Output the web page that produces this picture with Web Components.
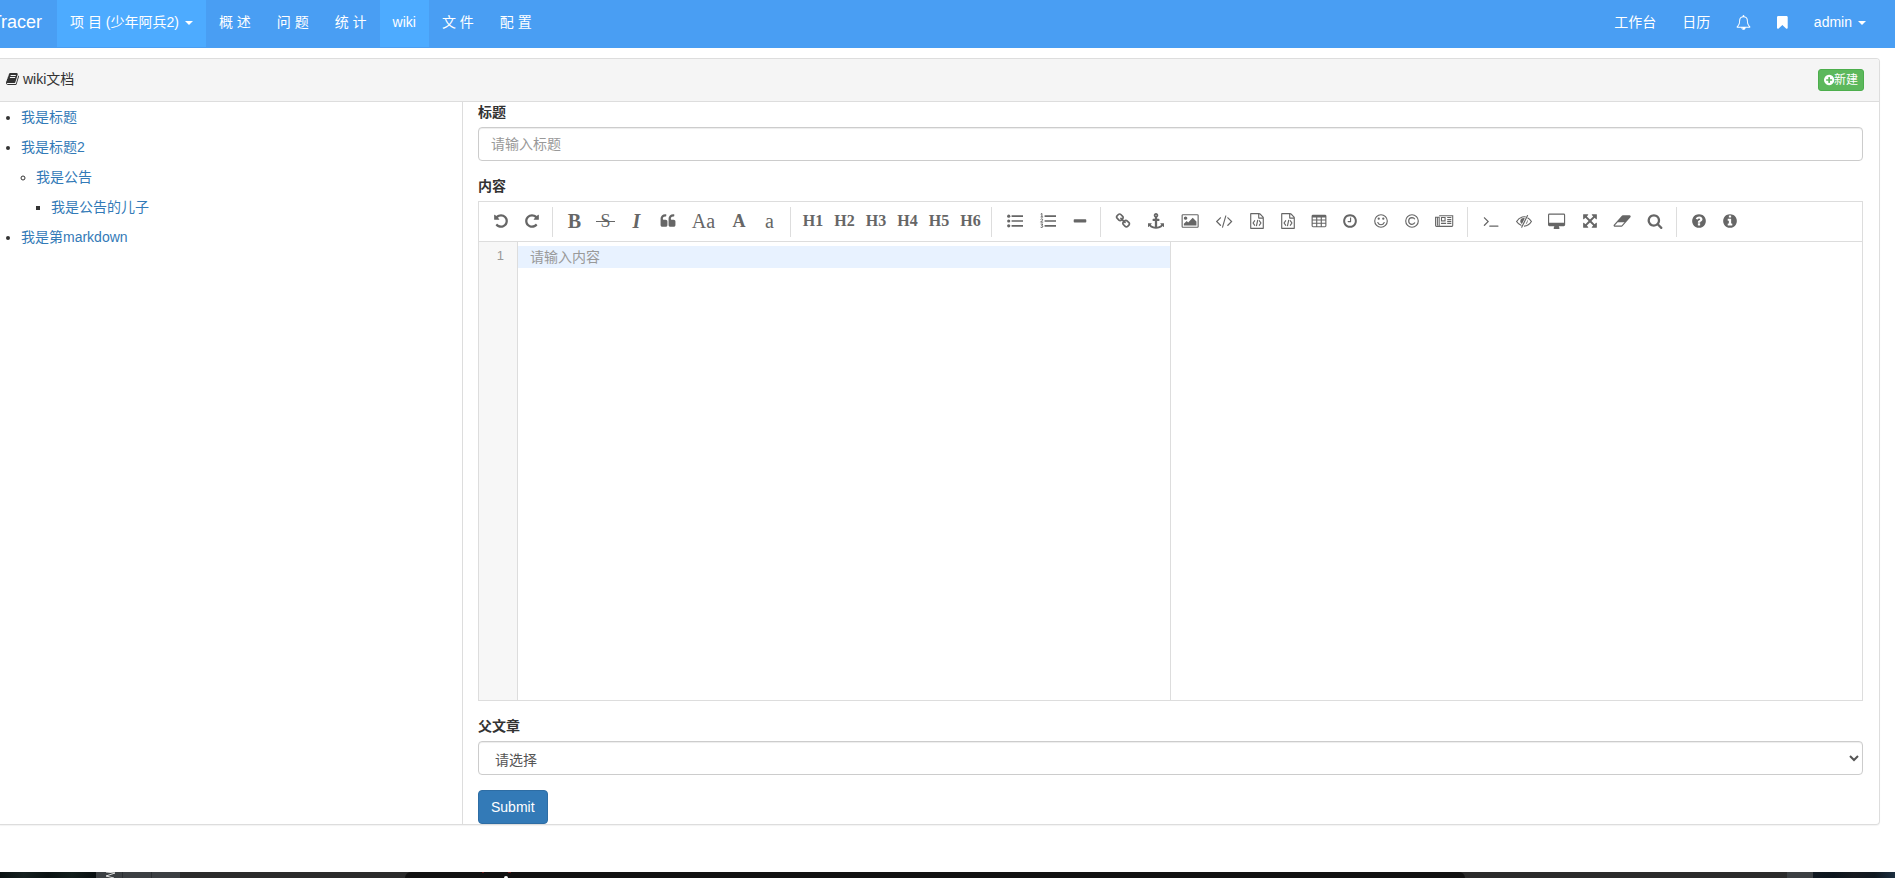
<!DOCTYPE html>
<html lang="zh-CN">
<head>
<meta charset="utf-8">
<meta name="viewport" content="width=device-width, initial-scale=1">
<title>wiki文档 - Tracer</title>
<style>
  body {
    margin: 0;
    background: #fff;
    color: #333;
    font: 14px/20px "Liberation Sans", "Noto Sans CJK SC", sans-serif;
  }
</style>
</head>
<body>
<wiki-page></wiki-page>

<script>
const CIRCLE = 'M1664 896q0 209-103 385.5t-279.5 279.5-385.5 103-385.5-103-279.5-279.5-103-385.5 103-385.5 279.5-279.5 385.5-103 385.5 103 279.5 279.5 103 385.5z';
const UNDO = '<path d="M1664 896q0 156-61 298t-164 245-245 164-298 61q-172 0-327-72.5t-264-204.5q-7-10-6.5-22.5t8.5-20.5l137-138q10-9 25-9 16 2 23 12 73 95 179 147t225 52q104 0 198.5-40.5t163.5-109.5 109.5-163.5 40.5-198.5-40.5-198.5-109.5-163.5-163.5-109.5-198.5-40.5q-98 0-188 35.5t-160 101.5l137 138q31 30 14 69-17 40-59 40h-448q-26 0-45-19t-19-45v-448q0-42 40-59 39-17 69 14l130 129q107-101 244.5-156.5t284.5-55.5q156 0 298 61t245 164 164 245 61 298z"/>';
const QUOTE = '<path d="M832 960v384q0 80-56 136t-136 56h-384q-80 0-136-56t-56-136v-704q0-104 40.5-198.5t109.5-163.5 163.5-109.5 198.5-40.5h64q26 0 45 19t19 45v128q0 26-19 45t-45 19h-64q-106 0-181 75t-75 181v32q0 40 28 68t68 28h224q80 0 136 56t56 136z"/>';
const FILE = '<path d="M1596 380q28 28 48 76t20 88v1152q0 40-28 68t-68 28h-1344q-40 0-68-28t-28-68v-1600q0-40 28-68t68-28h896q40 0 88 20t76 48zm-444-244v376h376q-10-29-22-41l-313-313q-12-12-41-22zm384 1528v-1024h-416q-40 0-68-28t-28-68v-416h-768v1536h1280z"/><path d="M660 830L460 1120l200 290M1132 830l200 290-200 290M980 760L830 1480" fill="none" stroke="currentColor" stroke-width="130"/>';
const BARS = '<path d="M512 256h1280v192H512zM512 800h1280v192H512zM512 1344h1280v192H512z"/>';

/* name: [view box left edge, view box width, markup]; every glyph is 1792 units tall */
const ICONS = {
  undo: [0, 1792, UNDO],
  redo: [0, 1792, '<g transform="matrix(-1 0 0 1 1792 0)">' + UNDO + '</g>'],
  quote: [0, 1792, QUOTE + '<g transform="translate(896 0)">' + QUOTE + '</g>'],
  ul: [0, 1792, '<circle cx="192" cy="352" r="180"/><circle cx="192" cy="896" r="180"/><circle cx="192" cy="1440" r="180"/>' + BARS],
  ol: [0, 1792, BARS + '<path d="M80 130l130-80v400M70 450h280M60 720q130-120 240-20 40 80-230 320h290M70 1240h250l-130 160q160 10 130 150-60 120-250 40" fill="none" stroke="currentColor" stroke-width="110"/>'],
  minus: [0, 1792, '<rect x="192" y="690" width="1408" height="384" rx="90"/>'],
  link: [0, 1792, '<path d="M1520 1216q0-40-28-68l-208-208q-28-28-68-28-42 0-72 32 3 3 19 18.500t21.500 21.500 15 19 13 25.500 3.500 27.500q0 40-28 68t-68 28q-15 0-27.500-3.500t-25.500-13-19-15-21.500-21.500-18.500-19q-33 31-33 73 0 40 28 68l206 207q27 27 68 27 40 0 68-26l147-146q28-28 28-67zm-703-705q0-40-28-68l-206-207q-28-28-68-28-39 0-68 27l-147 146q-28 28-28 67 0 40 28 68l208 208q27 27 68 27 42 0 72-31-3-3-19-18.500t-21.500-21.500-15-19-13-25.500-3.500-27.500q0-40 28-68t68-28q15 0 27.500 3.500t25.500 13 19 15 21.500 21.500 18.500 19q33-31 33-73zm895 705q0 120-85 203l-147 146q-83 83-203 83-121 0-204-85l-206-207q-83-83-83-203 0-123 88-209l-88-88q-86 88-208 88-120 0-204-84l-208-208q-84-84-84-204t85-203l147-146q83-83 203-83 121 0 204 85l206 207q83 83 83 203 0 123-88 209l88 88q86-88 208-88 120 0 204 84l208 208q84 84 84 204z"/>'],
  anchor: [0, 1792, '<path d="M960 256q0-26-19-45t-45-19-45 19-19 45 19 45 45 19 45-19 19-45zm832 928v352q0 22-20 30-8 2-12 2-12 0-23-9l-93-93q-119 143-318.500 226.500t-429.500 83.500-429.500-83.500-318.500-226.500l-93 93q-9 9-23 9-4 0-12-2-20-8-20-30v-352q0-14 9-23t23-9h352q22 0 30 20 8 19-7 35l-100 100q67 91 189.500 153.500t271.500 82.500v-647h-192q-26 0-45-19t-19-45v-128q0-26 19-45t45-19h192v-163q-58-34-93-92.500t-35-128.500q0-106 75-181t181-75 181 75 75 181q0 70-35 128.500t-93 92.500v163h192q26 0 45 19t19 45v128q0 26-19 45t-45 19h-192v647q149-20 271.500-82.500t189.500-153.500l-100-100q-15-16-7-35 8-20 30-20h352q14 0 23 9t9 23z"/>'],
  image: [-128, 2048, '<path d="M576 576q0 80-56 136t-136 56-136-56-56-136 56-136 136-56 136 56 56 136zm1024 384v448h-1408v-192l320-320 160 160 512-512zm96-704h-1600q-13 0-22.500 9.500t-9.500 22.500v1216q0 13 9.500 22.500t22.500 9.500h1600q13 0 22.500-9.500t9.500-22.500v-1216q0-13-9.500-22.500t-22.500-9.500zm160 32v1216q0 66-47 113t-113 47h-1600q-66 0-113-47t-47-113v-1216q0-66 47-113t113-47h1600q66 0 113 47t47 113z"/>'],
  code: [-64, 2048, '<path d="M617 1399l-50 50q-10 10-23 10t-23-10l-466-466q-10-10-10-23t10-23l466-466q10-10 23-10t23 10l50 50q10 10 10 23t-10 23l-393 393 393 393q10 10 10 23t-10 23zm591-1067l-373 1291q-4 13-15.500 19.500t-23.500 2.500l-62-17q-13-4-19.500-15.500t-2.500-24.500l373-1291q4-13 15.500-19.500t23.500-2.500l62 17q13 4 19.500 15.500t2.500 24.500zm657 651l-466 466q-10 10-23 10t-23-10l-50-50q-10-10-10-23t10-23l393-393-393-393q-10-10-10-23t10-23l50-50q10-10 23-10t23 10l466 466q10 10 10 23t-10 23z"/>'],
  file: [0, 1792, FILE],
  table: [0, 1792, '<path fill-rule="evenodd" d="M224 192h1344q160 0 160 160v1088q0 160-160 160H224q-160 0-160-160V352q0-160 160-160zM192 512v224h384V512zM704 512v224h384V512zM1216 512v224h384V512zM192 848v256h384V848zM704 848v256h384V848zM1216 848v256h384V848zM192 1216v256h384v-256zM704 1216v256h384v-256zM1216 1216v256h384v-256z"/>'],
  clock: [0, 1792, '<path d="M1024 544v448q0 14-9 23t-23 9h-320q-14 0-23-9t-9-23v-64q0-14 9-23t23-9h224v-352q0-14 9-23t23-9h64q14 0 23 9t9 23zm416 352q0-148-73-273t-198-198-273-73-273 73-198 198-73 273 73 273 198 198 273 73 273-73 198-198 73-273zm224 0q0 209-103 385.500t-279.500 279.500-385.500 103-385.500-103-279.500-279.500-103-385.500 103-385.500 279.500-279.500 385.500-103 385.500 103 279.500 279.500 103 385.500z"/>'],
  smile: [0, 1792, '<circle cx="896" cy="896" r="704" fill="none" stroke="currentColor" stroke-width="128"/><circle cx="640" cy="640" r="128"/><circle cx="1152" cy="640" r="128"/><path d="M540 1070q100 250 356 250t356-250" fill="none" stroke="currentColor" stroke-width="128" stroke-linecap="round"/>'],
  copyright: [0, 1792, '<circle cx="896" cy="896" r="704" fill="none" stroke="currentColor" stroke-width="128"/><path d="M1210 710Q1120 520 900 520 540 540 530 896q10 356 370 376 220 0 320-200" fill="none" stroke="currentColor" stroke-width="140"/>'],
  news: [-128, 2048, '<path d="M340 300H1856V1400q0 96-96 96H40q-104 0-104-104V470H340V1392q0 104-104 104M138 470V1392" fill="none" stroke="currentColor" stroke-width="120"/><path d="M1060 440v500H540V440zM540 1100h580v120H540zM1240 440h460v120h-460zM1240 660h460v120h-460zM1240 880h460v120h-460zM1240 1100h460v120h-460z"/><path d="M660 560h280v260H660z" fill="#fff"/>'],
  terminal: [0, 1792, '<path d="M649 983l-466 466q-10 10-23 10t-23-10l-50-50q-10-10-10-23t10-23l393-393-393-393q-10-10-10-23t10-23l50-50q10-10 23-10t23 10l466 466q10 10 10 23t-10 23zm1079 457v64q0 14-9 23t-23 9h-960q-14 0-23-9t-9-23v-64q0-14 9-23t23-9h960q14 0 23 9t9 23z"/>'],
  eye: [0, 1792, '<path d="M610 1410Q240 1250 66 960 300 560 700 450q200-50 380-10M1290 520Q1560 660 1726 960 1440 1440 900 1470" fill="none" stroke="currentColor" stroke-width="130"/><path d="M620 620Q440 760 490 1010q30 130 170 220L990 590Q800 500 620 620zM1310 760q70 330-240 520z"/><path d="M1290 290L640 1590" stroke="currentColor" stroke-width="130" stroke-linecap="round"/>'],
  desktop: [-64, 1920, '<path fill-rule="evenodd" d="M96 64H1696q160 0 160 160V1312q0 160-160 160H1152q0 96 64 180v76q0 64-64 64H640q-64 0-64-64v-76q64-84 64-180H96q-160 0-160-160V224Q-64 64 96 64zM96 192q-32 0-32 32v832q0 32 32 32h1600q32 0 32-32V224q0-32-32-32z"/>'],
  expand: [0, 1792, '<path d="M1411 541l-355 355 355 355 144-144q29-31 70-14 39 17 39 59v448q0 26-19 45t-45 19h-448q-42 0-59-40-17-39 14-69l144-144-355-355-355 355 144 144q31 30 14 69-17 40-59 40h-448q-26 0-45-19t-19-45v-448q0-42 40-59 39-17 69 14l144 144 355-355-355-355-144 144q-19 19-45 19-12 0-24-5-40-17-40-59v-448q0-26 19-45t45-19h448q42 0 59 40 17 39-14 69l-144 144 355 355 355-355-144-144q-31-30-14-69 17-40 59-40h448q26 0 45 19t19 45v448q0 42-39 59-13 5-25 5-26 0-45-19z"/>'],
  eraser: [0, 2048, '<path d="M960 1408l336-384h-768l-336 384h768zm1013-1077q15 34 9.500 71.500t-30.500 65.500l-896 1024q-38 44-96 44h-768q-38 0-69.500-20.500t-47.500-54.500q-15-34-9.500-71.500t30.500-65.500l896-1024q38-44 96-44h768q38 0 69.500 20.500t47.500 54.500z"/>'],
  search: [0, 1792, '<path d="M1216 832q0-185-131.500-316.500t-316.500-131.500-316.500 131.500-131.500 316.500 131.500 316.500 316.500 131.500 316.500-131.500 131.500-316.500zm512 832q0 52-38 90t-90 38q-54 0-90-38l-343-342q-179 124-399 124-143 0-273.500-55.500t-225-150-150-225-55.500-273.500 55.500-273.500 150-225 225-150 273.500-55.500 273.500 55.500 225 150 150 225 55.500 273.500q0 220-124 399l343 343q37 37 37 90z"/>'],
  help: [0, 1792, '<path fill-rule="evenodd" d="M1024 1376v-192q0-14-9-23t-23-9h-192q-14 0-23 9t-9 23v192q0 14 9 23t23 9h192q14 0 23-9t9-23zm256-672q0-88-55.500-163t-138.500-116-170-41q-243 0-371 213-15 24 8 42l132 100q7 6 19 6 16 0 25-12 53-68 86-92 34-24 86-24 48 0 85.500 26t37.500 59q0 38-20 61t-68 45q-63 28-115.500 86.500t-52.500 125.500v36q0 14 9 23t23 9h192q14 0 23-9t9-23q0-19 21.500-49.500t54.500-49.500q32-18 49-28.500t46-35 44.500-48 28-60.500 12.500-81z' + CIRCLE + '"/>'],
  info: [0, 1792, '<path fill-rule="evenodd" d="M1152 1376v-160q0-14-9-23t-23-9h-96v-512q0-14-9-23t-23-9h-320q-14 0-23 9t-9 23v160q0 14 9 23t23 9h96v320h-96q-14 0-23 9t-9 23v160q0 14 9 23t23 9h448q14 0 23-9t9-23zm-128-896v-160q0-14-9-23t-23-9h-192q-14 0-23 9t-9 23v160q0 14 9 23t23 9h192q14 0 23-9t9-23z' + CIRCLE + '"/>'],
  plus: [128, 1536, '<path fill-rule="evenodd" d="M1344 960v-128q0-26-19-45t-45-19h-256v-256q0-26-19-45t-45-19h-128q-26 0-45 19t-19 45v256h-256q-26 0-45 19t-19 45v128q0 26 19 45t45 19h256v256q0 26 19 45t45 19h128q26 0 45-19t19-45v-256h256q26 0 45-19t19-45z' + CIRCLE + '"/>'],
  book: [64, 1664, '<path d="M1703 478q40 57 18 129l-275 906q-19 64-76.500 107.500t-122.500 43.500h-923q-77 0-148.500-53.500t-99.500-131.500q-24-67-2-127 0-4 3-27t4-37q1-8-3-21.500t-3-19.500q2-11 8-21t16.500-23.500 16.500-23.500q23-38 45-91.500t30-91.500q3-10 .5-30t-.5-28q3-11 17-28t17-23q21-36 42-92t25-90q1-9-2.500-32t.5-28q4-13 22-30.500t22-22.500q19-26 42.500-84.500t27.500-96.500q1-8-3-25.500t-2-26.500q2-8 9-18t18-23 17-21q8-12 16.500-30.500t15-35 16-36 19.500-32 26.500-23.500 36-11.500 47.500 5.500l-1 3q38-9 51-9h761q74 0 114 56t18 130l-274 906q-36 119-71.500 153.500t-128.500 34.500h-869q-27 0-38 15-11 16-1 43 24 70 144 70h923q29 0 56-15.500t35-41.500l300-987q7-22 5-57 38 15 59 43zm-1064 2q-4 13 2 22.500t20 9.500h608q13 0 25.500-9.500t16.500-22.500l21-64q4-13-2-22.500t-20-9.500h-608q-13 0-25.500 9.500t-16.500 22.500zm-83 256q-4 13 2 22.500t20 9.500h608q13 0 25.500-9.500t16.500-22.500l21-64q4-13-2-22.500t-20-9.500h-608q-13 0-25.500 9.500t-16.500 22.500z"/>'],
  bell: [0, 1792, '<path d="M912 1696q0-16-16-16-59 0-101.500-42.500t-42.500-101.500q0-16-16-16t-16 16q0 73 51.500 124.500t124.500 51.500q16 0 16-16zm-666-288h1300q-266-300-266-832 0-51-24-105t-69-103-121.500-80.500-169.500-31.500-169.500 31.500-121.500 80.500-69 103-24 105q0 532-266 832zm1482 0q0 52-38 90t-90 38h-448q0 106-75 181t-181 75-181-75-75-181h-448q-52 0-90-38t-38-90q50-42 91-88t85-119.500 74.500-158.500 50-206 19.500-260q0-152 117-282.500t307-158.500q-8-19-8-39 0-40 28-68t68-28 68 28 28 68q0 20-8 39 190 28 307 158.500t117 282.500q0 139 19.500 260t50 206 74.500 158.500 85 119.500 91 88z"/>'],
  bookmark: [256, 1280, '<path d="M1420 128q23 0 44 9 33 13 52.500 41t19.500 62v1289q0 34-19.500 62t-52.500 41q-19 8-44 8-48 0-83-32l-441-424-441 424q-36 33-83 33-23 0-44-9-33-13-52.500-41t-19.500-62v-1289q0-34 19.500-62t52.500-41q21-9 44-9h1048z"/>']
};

function define(name, html, setup) {
  const template = document.createElement('template');
  template.innerHTML = html;
  customElements.define(name, class extends HTMLElement {
    constructor() {
      super();
      this.attachShadow({ mode: 'open' }).append(template.content.cloneNode(true));
    }
    connectedCallback() {
      if (setup) setup.call(this, this.shadowRoot);
    }
  });
}

define('fa-icon', `
  <style>
    :host { display: inline-flex; }
    svg { display: block; height: var(--icon-size, 14px); fill: currentColor; overflow: visible; }
  </style>
  <svg aria-hidden="true"></svg>`, function (root) {
  const [x, width, body] = ICONS[this.getAttribute('name')];
  const svg = root.querySelector('svg');
  svg.setAttribute('viewBox', x + ' 0 ' + width + ' 1792');
  svg.innerHTML = body;
});

define('nav-item', `
  <style>
    :host { display: flex; }
    a {
      display: flex; align-items: center; box-sizing: border-box; height: 47px;
      padding: 0 13px 3px; color: #fff; text-decoration: none; white-space: nowrap;
    }
    :host([active]) a { background: #4dabff; }
    .caret { display: none; margin: 2px 0 0 6px; border: 4px solid transparent; border-top-color: #fff; border-bottom: 0; }
    :host([dropdown]) .caret { display: block; }
  </style>
  <a href="#"><slot></slot><span class="caret"></span></a>`);

define('top-nav', `
  <style>
    :host { display: block; --icon-size: 15px; }
    nav { display: flex; background: #499ef3; border-bottom: 1px solid #499ef3; height: 47px; color: #fff; }
    .brand {
      display: flex; justify-content: flex-end; align-items: center; box-sizing: border-box;
      width: 57px; padding: 0 15px 3px 0; overflow: hidden;
      font-size: 18px; color: #fff; text-decoration: none;
    }
    .right { display: flex; margin-left: auto; padding-right: 16px; }
  </style>
  <nav>
    <a class="brand" href="#">Tracer</a>
    <nav-item active dropdown>项 目 (少年阿兵2)</nav-item>
    <nav-item>概 述</nav-item>
    <nav-item>问 题</nav-item>
    <nav-item>统 计</nav-item>
    <nav-item active>wiki</nav-item>
    <nav-item>文 件</nav-item>
    <nav-item>配 置</nav-item>
    <div class="right">
      <nav-item>工作台</nav-item>
      <nav-item>日历</nav-item>
      <nav-item><fa-icon name="bell"></fa-icon></nav-item>
      <nav-item><fa-icon name="bookmark"></fa-icon></nav-item>
      <nav-item dropdown>admin</nav-item>
    </div>
  </nav>`);

define('wiki-panel', `
  <style>
    :host { display: block; margin: 10px 15px 0 0; }
    .panel { border: 1px solid #ddd; border-left: 0; border-radius: 0 4px 4px 0; box-shadow: 0 1px 1px rgba(0,0,0,.05); }
    header {
      display: flex; align-items: flex-start; justify-content: space-between;
      padding: 10px 15px 10px 6px; background: #f5f5f5; border-bottom: 1px solid #ddd;
      border-radius: 0 3px 0 0;
    }
    .title { display: flex; align-items: center; gap: 4px; }
    .body { display: flex; }
    .side { flex: none; box-sizing: border-box; width: 463px; border-right: 1px solid #ddd; }
    .main { flex: 1; min-width: 0; }
  </style>
  <section class="panel">
    <header><div class="title"><slot name="title"></slot></div><slot name="action"></slot></header>
    <div class="body">
      <div class="side"><slot name="side"></slot></div>
      <div class="main"><slot></slot></div>
    </div>
  </section>`);

define('new-button', `
  <style>
    :host { display: block; }
    a {
      display: flex; align-items: center; height: 20px; padding: 0 5px;
      border: 1px solid #4cae4c; border-radius: 3px; background: #5cb85c; color: #fff;
      font-size: 12px; line-height: 18px; text-decoration: none; --icon-size: 12px;
    }
  </style>
  <a href="#"><fa-icon name="plus"></fa-icon><slot></slot></a>`);

define('wiki-tree', `
  <style>
    :host { display: block; }
    ul { margin: 0; padding-left: 15px; line-height: 30px; }
    :host > ul { padding-left: 21px; }
    a { color: #337ab7; text-decoration: none; }
  </style>
  <ul>
    <li><a href="#">我是标题</a></li>
    <li><a href="#">我是标题2</a>
      <ul>
        <li><a href="#">我是公告</a>
          <ul><li><a href="#">我是公告的儿子</a></li></ul>
        </li>
      </ul>
    </li>
    <li><a href="#">我是第markdown</a></li>
  </ul>`);

/* [tooltip, width, icon name or null, letter, letter class] */
const TOOLS = [
  [['撤销', 31, 'undo'], ['重做', 31, 'redo']],
  [['粗体', 31, null, 'B', 'bold'], ['删除线', 31, null, '\u00a0S\u00a0', 'strike'], ['斜体', 31, null, 'I', 'italic'],
   ['引用', 31, 'quote'], ['首字母大写', 41, null, 'Aa', ''], ['大写', 30, null, 'A', 'upper'], ['小写', 31, null, 'a', '']],
  [1, 2, 3, 4, 5, 6].map(n => ['标题' + n, n % 2 ? 32 : 31, null, 'H' + n, 'head']),
  [['无序列表', 34, 'ul'], ['有序列表', 32, 'ol'], ['横线', 31, 'minus']],
  [['链接', 32, 'link'], ['引用链接', 34, 'anchor'], ['添加图片', 34, 'image'], ['行内代码', 34, 'code'],
   ['预格式文本', 31, 'file'], ['代码块', 31, 'file'], ['添加表格', 31, 'table'], ['日期时间', 31, 'clock'],
   ['Emoji表情', 31, 'smile'], ['HTML实体字符', 31, 'copyright'], ['插入分页符', 35, 'news']],
  [['跳转到行', 33, 'terminal'], ['关闭实时预览', 33, 'eye'], ['全窗口预览', 34, 'desktop'],
   ['全屏', 31, 'expand'], ['清空', 34, 'eraser'], ['搜索', 32, 'search']],
  [['使用帮助', 31, 'help'], ['关于', 31, 'info']]
];

define('md-toolbar', `
  <style>
    :host { display: block; border-bottom: 1px solid #ddd; background: #fff; overflow: hidden; }
    .bar { display: flex; padding: 5px 0 4px; }
    .group { display: flex; height: 30px; padding: 0 5px 0 6px; border-right: 1px solid #ddd; }
    .group:last-child { border: 0; }
    button {
      display: flex; align-items: center; justify-content: center; height: 30px; padding: 0 0 2px;
      border: 0; background: none; color: #666; --icon-size: 16px;
      font: 20px/24px "Liberation Serif", serif;
    }
    .bold { font-weight: bold; }
    .italic { font-weight: bold; font-style: italic; }
    .strike { font-size: 18px; text-decoration: line-through; }
    .upper { font-weight: bold; font-size: 18px; }
    .head { font-weight: bold; font-size: 16px; }
  </style>
  <div class="bar" role="toolbar"></div>`, function (root) {
  root.querySelector('.bar').innerHTML = TOOLS.map(group => '<div class="group">' + group.map(
    ([tip, width, icon, letter, cls]) =>
      `<button type="button" title="${tip}" style="width:${width}px">` +
      (icon ? `<fa-icon name="${icon}"></fa-icon>` : `<span class="${cls}">${letter}</span>`) + '</button>'
  ).join('') + '</div>').join('');
});

define('md-editor', `
  <style>
    :host { display: flex; flex-direction: column; box-sizing: border-box; height: 500px; border: 1px solid #ddd; }
    .panes { flex: 1; display: flex; min-height: 0; }
    .source { flex: 1; display: flex; min-width: 0; }
    .gutter {
      box-sizing: border-box; width: 39px; padding: 4px 13px 0 0; text-align: right;
      background: #f7f7f7; border-right: 1px solid #ddd; color: #999;
      font: 13px/20px "Liberation Sans", sans-serif;
    }
    .code { flex: 1; display: flex; min-width: 0; padding-top: 4px; }
    .preview { flex: 1; box-sizing: border-box; border-left: 1px solid #ddd; }
    ::slotted(textarea) {
      flex: 1; min-width: 0; box-sizing: border-box; padding: 0 12px; border: 0; outline: 0; resize: none;
      background: linear-gradient(#e8f2ff, #e8f2ff) top / 100% 22px no-repeat;
      font: inherit; line-height: 22px;
    }
  </style>
  <md-toolbar></md-toolbar>
  <div class="panes">
    <div class="source">
      <div class="gutter">1</div>
      <div class="code"><slot></slot></div>
    </div>
    <div class="preview"></div>
  </div>`);

define('wiki-form', `
  <style>
    :host { display: block; padding: 0 16px 0 15px; }
    form { display: flex; flex-direction: column; gap: 15px; }
    .field { display: flex; flex-direction: column; gap: 5px; }
    label { font-weight: bold; }
    input, select {
      box-sizing: border-box; width: 100%; height: 34px; padding: 6px 12px;
      border: 1px solid #ccc; border-radius: 4px; background: #fff; color: #555;
      font: inherit; box-shadow: inset 0 1px 1px rgba(0,0,0,.075);
    }
    select { padding: 8px 12px 4px; }
    ::placeholder { color: #999; opacity: 1; }
    button {
      align-self: flex-start; height: 34px; padding: 6px 12px; border: 1px solid #2e6da4;
      border-radius: 4px; background: #337ab7; color: #fff; font: inherit;
    }
  </style>
  <form>
    <div class="field">
      <label for="title">标题</label>
      <input id="title" type="text" placeholder="请输入标题">
    </div>
    <div class="field">
      <label for="content">内容</label>
      <md-editor><textarea id="content" placeholder="请输入内容"></textarea></md-editor>
    </div>
    <div class="field">
      <label for="parent">父文章</label>
      <select id="parent"><option>请选择</option></select>
    </div>
    <button type="button">Submit</button>
  </form>`);

/* thin strip of dark desktop along the bottom edge */
define('desktop-strip', `
  <style>
    :host { display: flex; height: 6px; background: #2b2b2b; overflow: hidden; }
    .left { width: 96px; background: linear-gradient(90deg, #0a1212, #15201f, #0a1212, #131e1c, #080e10); }
    .tabs { display: flex; width: 84px; background: #3c4043; }
    .tabs i { box-sizing: border-box; width: 27px; border-right: 1px solid #2b2f32; }
    .tabs i + i { width: 29px; }
    svg { display: block; }
    .window { flex: 1; margin: 0 322px 0 225px; border-radius: 6px 6px 0 0; background: #111; }
    .block { width: 26px; background: #3c4043; }
    .right { width: 82px; background: linear-gradient(90deg, #101820, #0c151d, #171a20, #101820, #1c2f40); }
  </style>
  <div class="left"></div>
  <div class="tabs">
    <i><svg width="26" height="6"><path d="M10 0l9 1-9 3 8 2" fill="none" stroke="#ddd" stroke-width="1"/></svg></i><i></i>
  </div>
  <div class="window">
    <svg width="120" height="6"><path d="M77 0h2v1h-2zM103 0h3v1h-3z" fill="#6d1b1b"/><circle cx="101" cy="6" r="2" fill="#fff"/></svg>
  </div>
  <div class="block"></div>
  <div class="right"></div>`);

define('wiki-page', `
  <style>
    :host { display: flex; flex-direction: column; min-height: 100vh; }
    main { flex: 1; }
  </style>
  <top-nav></top-nav>
  <main>
    <wiki-panel>
      <fa-icon slot="title" name="book"></fa-icon>
      <span slot="title">wiki文档</span>
      <new-button slot="action">新建</new-button>
      <wiki-tree slot="side"></wiki-tree>
      <wiki-form></wiki-form>
    </wiki-panel>
  </main>
  <desktop-strip></desktop-strip>`);
</script>
</body>
</html>
